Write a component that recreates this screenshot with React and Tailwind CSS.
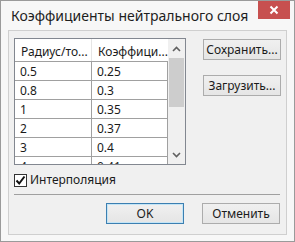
import React from 'react';

const rows = [
    ['0.5', '0.25'],
    ['0.8', '0.3'],
    ['1', '0.35'],
    ['2', '0.37'],
    ['3', '0.4'],
    ['4', '0.41'],
];

const Button = ({ children, primary, className = '' }) => (
    <button
        className={`h-[21px] w-[78px] flex items-center justify-center border text-[12px] text-[#1b1b1b] bg-gradient-to-b from-[#f0f0f0] to-[#e5e5e5] ${primary ? 'border-[#3c7fb1] shadow-[inset_0_0_0_1px_#c4e5f6]' : 'border-[#acacac]'} ${className}`}
    >
        {children}
    </button>
);

const ChevronUp = () => (
    <svg width="9" height="6" viewBox="0 0 9 6" fill="none">
        <path d="M1 5 L4.5 1.5 L8 5" stroke="#606060" strokeWidth="1.6" />
    </svg>
);

const ChevronDown = () => (
    <svg width="9" height="6" viewBox="0 0 9 6" fill="none">
        <path d="M1 1 L4.5 4.5 L8 1" stroke="#606060" strokeWidth="1.6" />
    </svg>
);

export default function App() {
    return (
        <div className="w-[295px] h-[242px] bg-[#f7f7f7] border border-[#9a9a9a] flex flex-col overflow-hidden" style={{ fontFamily: '"Noto Sans", "Open Sans", sans-serif' }}>
            {/* Title bar */}
            <div className="h-[29px] flex items-start justify-between shrink-0">
                <div className="pl-[10px] pt-[5px] text-[14px] text-[#1e1e1e] leading-[20px] whitespace-nowrap">Коэффициенты нейтрального слоя</div>
                <div className="w-[32px] h-[19px] mr-[4px] -mt-px bg-[#c7504f] flex items-center justify-center">
                    <svg width="10" height="10" viewBox="0 0 10 10">
                        <path d="M1.5 1.5 L8.5 8.5 M8.5 1.5 L1.5 8.5" stroke="white" strokeWidth="2" />
                    </svg>
                </div>
            </div>

            {/* Client area */}
            <div className="mx-[7px] mb-[6px] flex-1 bg-[#f0f0f0] border border-[#cfcfcf] flex flex-col px-[5px] pt-[7px]">
                <div className="flex">
                    {/* List view */}
                    <div className="w-[172px] h-[127px] border border-[#828790] bg-white flex overflow-hidden">
                        <div className="w-[153px] h-full flex flex-col overflow-hidden text-[12px] text-[#1b1b1b]">
                            <div className="h-[23px] shrink-0 flex border-b border-[#a0a0a0]">
                                <div className="w-[77px] pl-[6px] pt-[4px] border-r border-[#e5e5e5] whitespace-nowrap">Радиус/то...</div>
                                <div className="w-[76px] pl-[6px] pt-[4px] whitespace-nowrap">Коэффици...</div>
                            </div>
                            {rows.map(([a, b], i) => {
                                const last = i === rows.length - 1;
                                return (
                                    <div key={a} className={`shrink-0 flex ${last ? 'h-[8px] overflow-hidden' : 'h-[19px] border-b border-[#a0a0a0]'}`}>
                                        <div className="w-[77px] pl-[5px] pt-[1px] leading-[17px] border-r border-[#a0a0a0]">{a}</div>
                                        <div className="w-[76px] pl-[5px] pt-[1px] leading-[17px] border-r border-[#a0a0a0]">{b}</div>
                                    </div>
                                );
                            })}
                        </div>
                        {/* Scrollbar */}
                        <div className="w-[17px] bg-[#f0f0f0] flex flex-col items-center">
                            <div className="h-[17px] w-full flex items-center justify-center pt-[2px]">
                                <ChevronUp />
                            </div>
                            <div className="w-[15px] h-[49px] mt-[2px] bg-[#cdcdcd]" />
                            <div className="flex-1" />
                            <div className="h-[17px] w-full flex items-center justify-center pb-[2px]">
                                <ChevronDown />
                            </div>
                        </div>
                    </div>

                    {/* Side buttons */}
                    <div className="ml-[17px] pt-[1px] flex flex-col gap-[15px]">
                        <Button>Сохранить...</Button>
                        <Button>Загрузить...</Button>
                    </div>
                </div>

                {/* Checkbox */}
                <div className="mt-[6px] flex items-center gap-[3px] text-[12px] text-[#1b1b1b]">
                    <div className="w-[13px] h-[13px] border border-[#333] bg-white flex items-center justify-center">
                        <svg width="11" height="11" viewBox="0 0 11 11">
                            <path d="M1.5 5.5 L4.2 8.5 L9.5 1.5" stroke="#111" strokeWidth="2" fill="none" />
                        </svg>
                    </div>
                    <span>Интерполяция</span>
                </div>

                {/* Separator */}
                <div className="mt-[5px] mr-[1px] h-px bg-[#a0a0a0]" />

                {/* Bottom buttons */}
                <div className="mt-[8px] flex justify-end gap-[18px] pr-[1px]">
                    <Button primary>OK</Button>
                    <Button>Отменить</Button>
                </div>
            </div>
        </div>
    );
}
